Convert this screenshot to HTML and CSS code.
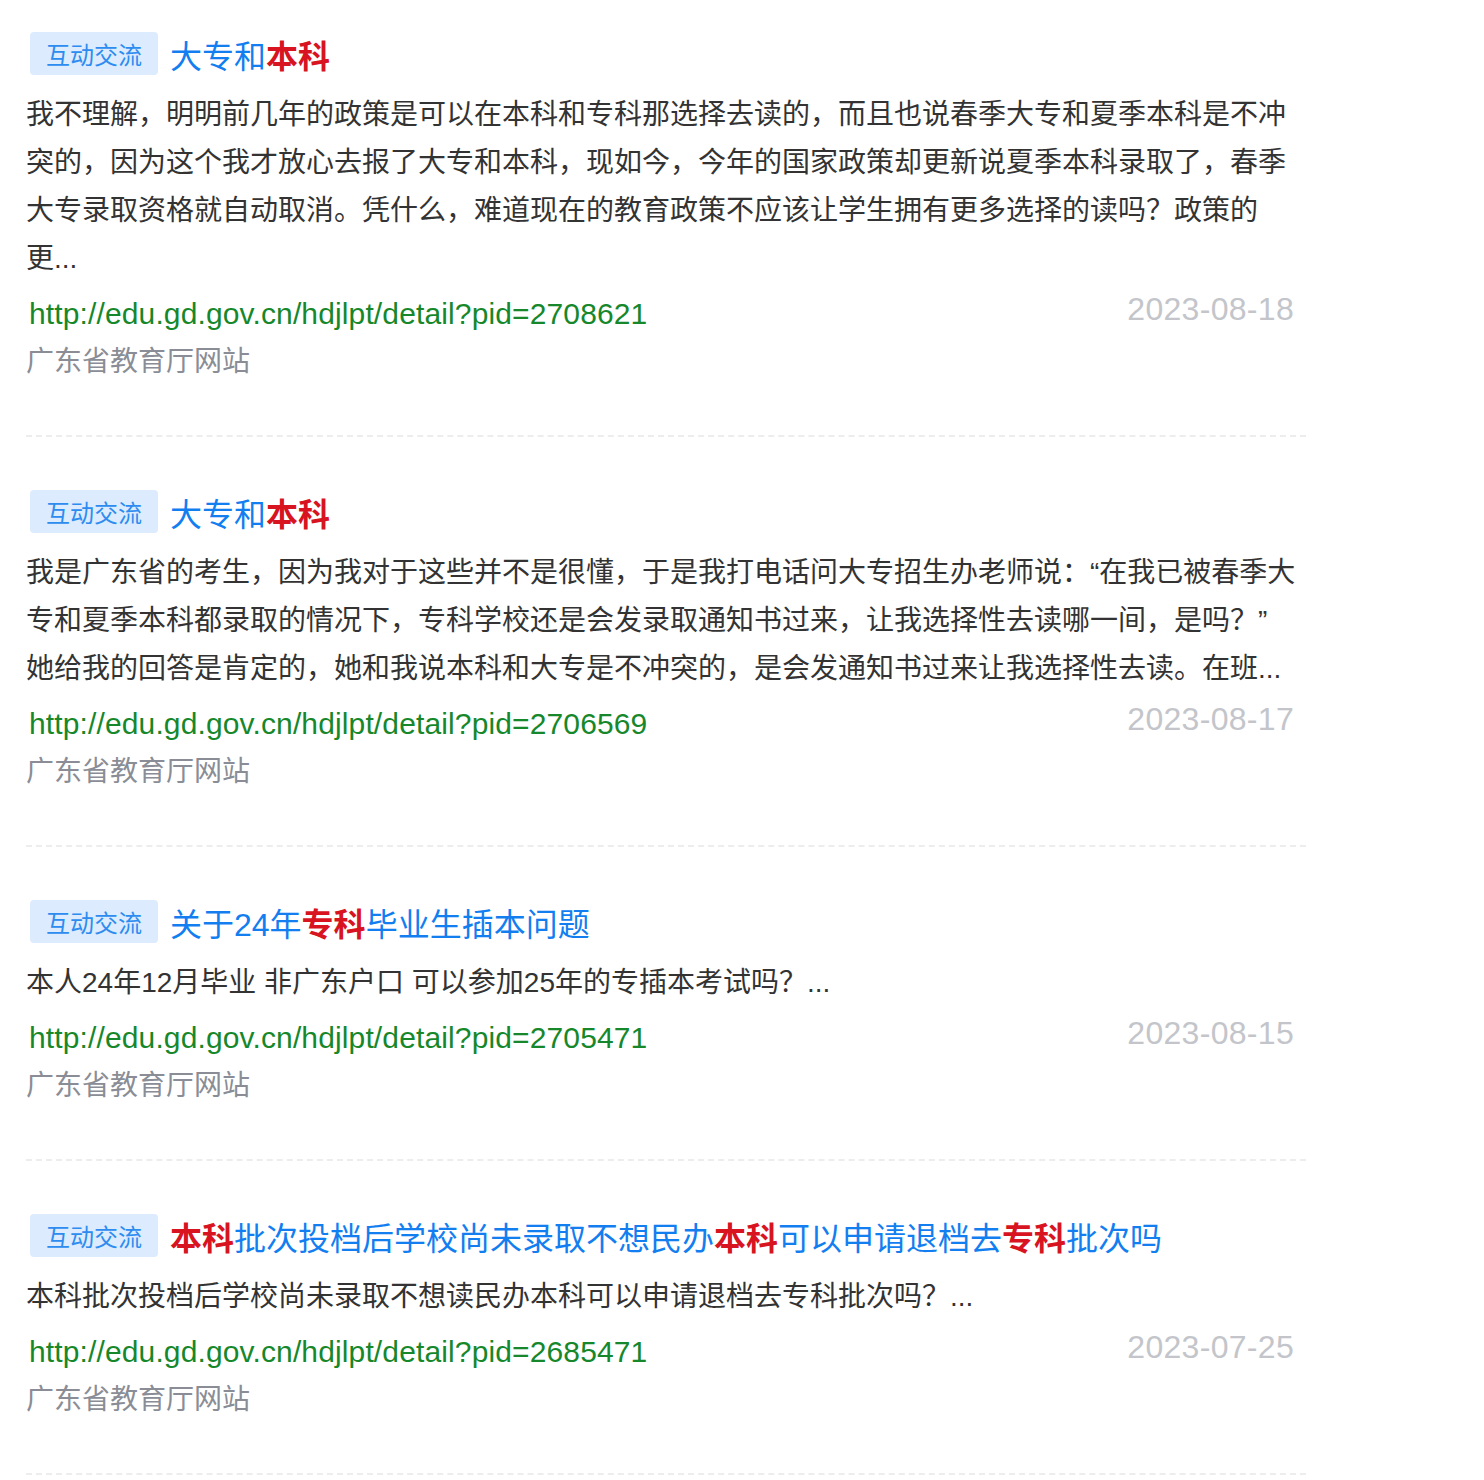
FILE: index.html
```html
<!DOCTYPE html>
<html lang="zh-CN">
<head>
  <meta charset="UTF-8">
  <meta name="viewport" content="width=device-width, initial-scale=1.0">
  <title>搜索结果</title>
  <link rel="stylesheet" href="styles.css">
</head>
<body>
  <div class="result-list">
    <!-- 结果 1 -->
    <div class="result-item">
      <div class="result-head">
        <span class="result-tag">互动交流</span>
        <a class="result-title" href="#">大专和<em>本科</em></a>
      </div>
      <p class="result-desc">我不理解，明明前几年的政策是可以在本科和专科那选择去读的，而且也说春季大专和夏季本科是不冲突的，因为这个我才放心去报了大专和本科，现如今，今年的国家政策却更新说夏季本科录取了，春季大专录取资格就自动取消。凭什么，难道现在的教育政策不应该让学生拥有更多选择的读吗？政策的更...</p>
      <div class="result-foot">
        <div class="result-meta">
          <div class="result-url">http://edu.gd.gov.cn/hdjlpt/detail?pid=2708621</div>
          <div class="result-source">广东省教育厅网站</div>
        </div>
        <div class="result-date">2023-08-18</div>
      </div>
    </div>

    <!-- 结果 2 -->
    <div class="result-item">
      <div class="result-head">
        <span class="result-tag">互动交流</span>
        <a class="result-title" href="#">大专和<em>本科</em></a>
      </div>
      <p class="result-desc">我是广东省的考生，因为我对于这些并不是很懂，于是我打电话问大专招生办老师说：“在我已被春季大专和夏季本科都录取的情况下，专科学校还是会发录取通知书过来，让我选择性去读哪一间，是吗？”<br>她给我的回答是肯定的，她和我说本科和大专是不冲突的，是会发通知书过来让我选择性去读。在班...</p>
      <div class="result-foot">
        <div class="result-meta">
          <div class="result-url">http://edu.gd.gov.cn/hdjlpt/detail?pid=2706569</div>
          <div class="result-source">广东省教育厅网站</div>
        </div>
        <div class="result-date">2023-08-17</div>
      </div>
    </div>

    <!-- 结果 3 -->
    <div class="result-item">
      <div class="result-head">
        <span class="result-tag">互动交流</span>
        <a class="result-title" href="#">关于24年<em>专科</em>毕业生插本问题</a>
      </div>
      <p class="result-desc">本人24年12月毕业 非广东户口 可以参加25年的专插本考试吗？...</p>
      <div class="result-foot">
        <div class="result-meta">
          <div class="result-url">http://edu.gd.gov.cn/hdjlpt/detail?pid=2705471</div>
          <div class="result-source">广东省教育厅网站</div>
        </div>
        <div class="result-date">2023-08-15</div>
      </div>
    </div>

    <!-- 结果 4 -->
    <div class="result-item">
      <div class="result-head">
        <span class="result-tag">互动交流</span>
        <a class="result-title" href="#"><em>本科</em>批次投档后学校尚未录取不想民办<em>本科</em>可以申请退档去<em>专科</em>批次吗</a>
      </div>
      <p class="result-desc">本科批次投档后学校尚未录取不想读民办本科可以申请退档去专科批次吗？...</p>
      <div class="result-foot">
        <div class="result-meta">
          <div class="result-url">http://edu.gd.gov.cn/hdjlpt/detail?pid=2685471</div>
          <div class="result-source">广东省教育厅网站</div>
        </div>
        <div class="result-date">2023-07-25</div>
      </div>
    </div>
  </div>
</body>
</html>
```

FILE: styles.css
```css
/* Общие стили */
body {
  margin: 0;
  background-color: #fff;
  font-family: "Liberation Sans", "Noto Sans CJK SC", sans-serif;
  color: #333;
}

.result-list {
  width: 1280px;
  margin-left: 26px;
}

/* Один результат */
.result-item {
  padding: 53px 0 49px;
  border-bottom: 2px dashed #ededed;
}

.result-item:first-child {
  padding-top: 32px;
}

.result-head {
  display: flex;
  align-items: center;
  height: 43px;
  padding-left: 4px;
}

.result-tag {
  display: flex;
  align-items: center;
  height: 43px;
  padding: 0 16px;
  background-color: #dcebfd;
  color: #2d8cf0;
  font-size: 24px;
  border-radius: 4px;
}

.result-title {
  margin-left: 12px;
  font-size: 32px;
  color: #127ef0;
  text-decoration: none;
}

.result-title em {
  font-style: normal;
  font-weight: bold;
  color: #d7141f;
}

.result-desc {
  margin: 16px 0 0;
  padding-right: 8px;
  font-size: 28px;
  line-height: 48px;
  color: #333;
}

/* Ссылка, источник и дата */
.result-foot {
  display: flex;
  justify-content: space-between;
  align-items: flex-start;
  margin-top: 7px;
  padding-right: 12px;
}

.result-url {
  padding-left: 3px;
  font-size: 30px;
  letter-spacing: 0.13px;
  line-height: 48px;
  color: #16882b;
}

.result-source {
  font-size: 28px;
  line-height: 48px;
  color: #8a8d95;
}

.result-date {
  font-size: 32px;
  letter-spacing: 0.3px;
  line-height: 38px;
  color: #c3c5ca;
}
```
